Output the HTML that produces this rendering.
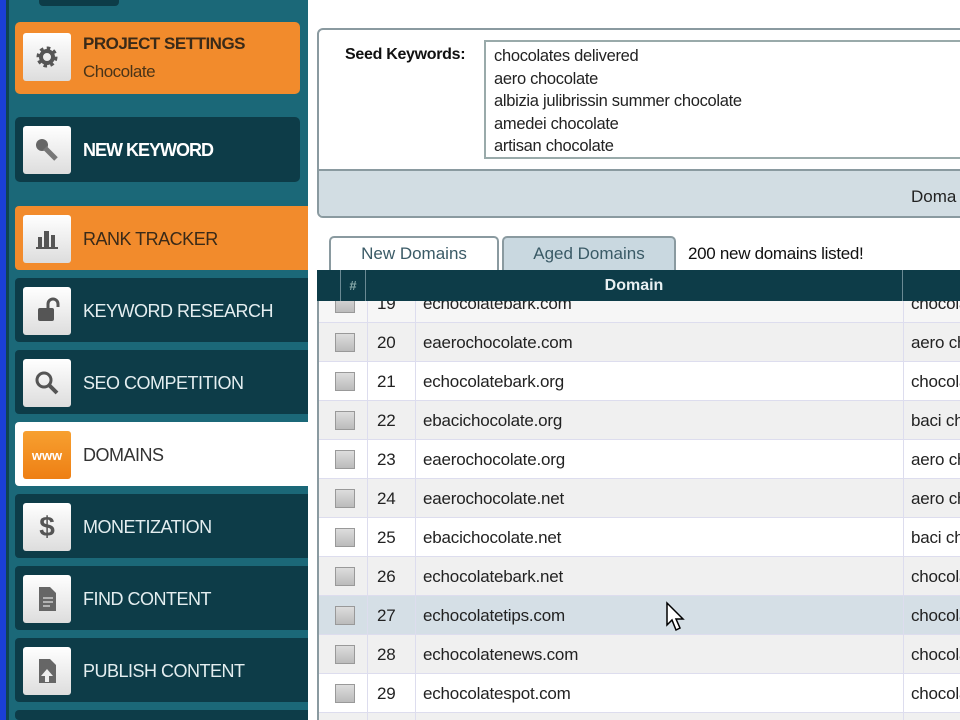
<!DOCTYPE html>
<html style="width:960px;height:720px;overflow:hidden"><head><style>
*{margin:0;padding:0;box-sizing:border-box}
body{width:960px;height:720px;overflow:hidden;background:#fff;font-family:"Liberation Sans",sans-serif;position:relative}
.blue{position:absolute;left:0;top:0;width:6px;height:720px;background:#1a3fd6}
.side{position:absolute;left:6px;top:0;width:302px;height:720px;background:#1b6878;border-left:3px solid #0f4450}
.item{position:absolute;left:15px;width:293px;height:64px;background:#0d3c48;border-radius:4px 0 0 4px;overflow:hidden}
.item .ic{position:absolute;left:8px;top:9px;width:48px;height:48px;background:linear-gradient(#fff,#ddd);border-radius:3px;display:flex;align-items:center;justify-content:center}
.item .t{position:absolute;left:68px;top:23px;color:#e4eef0;font-size:18px;letter-spacing:-0.5px;white-space:nowrap}
.org{background:#f28b2c}
.org .t{color:#3a2a18}
.wh{background:#fff}
.wh .t{color:#333}
.panel{position:absolute;left:317px;top:28px;width:660px;height:190px;border:2px solid #8a9aa0;border-radius:6px;background:#fff;overflow:hidden}
.lbl{position:absolute;left:26px;top:16px;font-weight:bold;font-size:16px;color:#111;letter-spacing:-0.3px}
.ta{position:absolute;left:165px;top:10px;width:500px;height:119px;border:2px solid #9aa;padding:3px 8px;font-size:16.5px;line-height:22.5px;color:#222;letter-spacing:-0.3px}
.bar{position:absolute;left:0;top:139px;width:100%;height:60px;background:#d2dde3;border-top:2px solid #8a9aa0}
.bar span{position:absolute;left:592px;top:16px;font-size:17px;color:#222}
.tab{position:absolute;top:236px;height:34px;border:2px solid #8a9aa0;border-bottom:none;border-radius:5px 5px 0 0;font-size:17px;color:#3a5a66;text-align:center;line-height:32px}
.hdr{position:absolute;left:317px;top:270px;width:643px;height:31px;background:#0d3c48;color:#e8f0f2;font-weight:bold;font-size:16px;z-index:5}
.rows{position:absolute;left:317px;top:284px;width:643px;height:436px;overflow:hidden;border-left:2px solid #8a9aa0;z-index:1}
.r{position:relative;height:39px;border-bottom:1px solid #dde;font-size:17px;color:#222;white-space:nowrap;letter-spacing:-0.2px}
.r div{position:absolute;top:10px}
.cb{left:16px;top:10px!important;width:20px;height:19px;border:1px solid #999;background:linear-gradient(#ddd,#bbb)}
.vl{position:absolute;top:0;width:1px;height:100%;background:#dde;z-index:2}
</style></head><body>
<div class="blue"></div>
<div class="side">
<div style="position:absolute;left:30px;top:-8px;width:80px;height:14px;background:#0d3c48;border-radius:4px"></div>
</div>
<div class="item org" style="top:22px;height:72px;width:285px;border-radius:5px">
 <div class="ic" style="top:11px"><svg width="26" height="26" viewBox="0 0 26 26"><circle cx="13" cy="13" r="8" fill="none" stroke="#555" stroke-width="5" stroke-dasharray="3.2 3"/><circle cx="13" cy="13" r="6" fill="none" stroke="#555" stroke-width="4"/></svg></div>
 <div class="t" style="top:12px;font-weight:bold;font-size:17px">PROJECT SETTINGS</div>
 <div class="t" style="top:40px;font-size:17px;color:#4a3418">Chocolate</div>
</div>
<div class="item" style="top:117px;height:65px;width:285px;border-radius:5px">
 <div class="ic"><svg width="30" height="30" viewBox="0 0 30 30"><circle cx="10" cy="10" r="6" fill="#666"/><path d="M13 13 L24 24" stroke="#777" stroke-width="5"/></svg></div>
 <div class="t" style="font-weight:bold;color:#fff;letter-spacing:-1px">NEW KEYWORD</div>
</div>
<div class="item org" style="top:206px">
 <div class="ic"><svg width="26" height="24" viewBox="0 0 26 24"><rect x="4" y="10" width="4" height="10" fill="#555"/><rect x="10" y="4" width="5" height="16" fill="#555"/><rect x="17" y="8" width="4" height="12" fill="#555"/><rect x="2" y="20" width="22" height="2" fill="#555"/></svg></div>
 <div class="t">RANK TRACKER</div>
</div>
<div class="item" style="top:278px">
 <div class="ic"><svg width="30" height="30" viewBox="0 0 30 30"><path d="M16 12 V8 a5 5 0 0 1 10 0 v3" fill="none" stroke="#555" stroke-width="3"/><rect x="6" y="12" width="16" height="13" rx="2" fill="#555"/></svg></div>
 <div class="t">KEYWORD RESEARCH</div>
</div>
<div class="item" style="top:350px">
 <div class="ic"><svg width="30" height="30" viewBox="0 0 30 30"><circle cx="12" cy="12" r="7" fill="none" stroke="#555" stroke-width="3"/><path d="M17 17 L25 25" stroke="#555" stroke-width="4"/></svg></div>
 <div class="t">SEO COMPETITION</div>
</div>
<div class="item wh" style="top:422px">
 <div class="ic" style="background:linear-gradient(#f7a030,#ee7f14);color:#fff;font-size:13px;font-weight:bold">www</div>
 <div class="t">DOMAINS</div>
</div>
<div class="item" style="top:494px">
 <div class="ic" style="font-size:28px;font-weight:bold;color:#555">$</div>
 <div class="t">MONETIZATION</div>
</div>
<div class="item" style="top:566px">
 <div class="ic"><svg width="24" height="28" viewBox="0 0 24 28"><path d="M4 2 H15 L21 8 V26 H4 Z" fill="#666"/><path d="M8 13h10M8 17h10M8 21h7" stroke="#ccc" stroke-width="1.5"/></svg></div>
 <div class="t">FIND CONTENT</div>
</div>
<div class="item" style="top:638px">
 <div class="ic"><svg width="24" height="28" viewBox="0 0 24 28"><path d="M4 2 H15 L21 8 V26 H4 Z" fill="#666"/><path d="M12 12 L6 19 H10 V25 H14 V19 H18 Z" fill="#eee"/></svg></div>
 <div class="t">PUBLISH CONTENT</div>
</div>
<div class="item" style="top:710px;height:10px"></div>

<div class="panel">
 <div class="lbl">Seed Keywords:</div>
 <div class="ta">chocolates delivered<br>aero chocolate<br>albizia julibrissin summer chocolate<br>amedei chocolate<br>artisan chocolate</div>
 <div class="bar"><span>Doma</span></div>
</div>
<div class="tab" style="left:329px;width:170px;background:#fff">New Domains</div>
<div class="tab" style="left:502px;width:174px;background:#c9d8e0">Aged Domains</div>
<div style="position:absolute;left:688px;top:244px;font-size:17px;color:#111;letter-spacing:-0.3px">200 new domains listed!</div>
<div class="hdr">
 <div style="position:absolute;left:23px;top:0;width:26px;height:31px;border-left:1px solid #6a8a94;border-right:1px solid #6a8a94;text-align:center;line-height:31px;font-size:13px;color:#8aa">#</div>
 <div style="position:absolute;left:49px;width:536px;text-align:center;line-height:31px">Domain</div>
 <div style="position:absolute;left:585px;top:0;width:1px;height:31px;background:#6a8a94"></div>
</div>
<div class="rows">
 <div class="vl" style="left:48px"></div><div class="vl" style="left:96px"></div><div class="vl" style="left:584px"></div>
 <div class="r" style="background:#f6f6f6"><div class="cb"></div><div style="left:58px">19</div><div style="left:104px">echocolatebark.com</div><div style="left:592px">chocolate</div></div>
 <div class="r" style="background:#f0f0f0"><div class="cb"></div><div style="left:58px">20</div><div style="left:104px">eaerochocolate.com</div><div style="left:592px">aero chocolate</div></div>
 <div class="r" style="background:#fff"><div class="cb"></div><div style="left:58px">21</div><div style="left:104px">echocolatebark.org</div><div style="left:592px">chocolate</div></div>
 <div class="r" style="background:#f0f0f0"><div class="cb"></div><div style="left:58px">22</div><div style="left:104px">ebacichocolate.org</div><div style="left:592px">baci chocolate</div></div>
 <div class="r" style="background:#fff"><div class="cb"></div><div style="left:58px">23</div><div style="left:104px">eaerochocolate.org</div><div style="left:592px">aero chocolate</div></div>
 <div class="r" style="background:#f0f0f0"><div class="cb"></div><div style="left:58px">24</div><div style="left:104px">eaerochocolate.net</div><div style="left:592px">aero chocolate</div></div>
 <div class="r" style="background:#fff"><div class="cb"></div><div style="left:58px">25</div><div style="left:104px">ebacichocolate.net</div><div style="left:592px">baci chocolate</div></div>
 <div class="r" style="background:#f0f0f0"><div class="cb"></div><div style="left:58px">26</div><div style="left:104px">echocolatebark.net</div><div style="left:592px">chocolate</div></div>
 <div class="r" style="background:#d5dfe6"><div class="cb"></div><div style="left:58px">27</div><div style="left:104px">echocolatetips.com</div><div style="left:592px">chocolate</div>
  <svg style="position:absolute;left:346px;top:5px;z-index:3" width="22" height="32" viewBox="0 0 22 32"><path d="M2 2 L2 24 L7 19 L11 29 L15 27 L11 18 L18 18 Z" fill="#fff" stroke="#000" stroke-width="1.5"/></svg></div>
 <div class="r" style="background:#f0f0f0"><div class="cb"></div><div style="left:58px">28</div><div style="left:104px">echocolatenews.com</div><div style="left:592px">chocolate</div></div>
 <div class="r" style="background:#fff"><div class="cb"></div><div style="left:58px">29</div><div style="left:104px">echocolatespot.com</div><div style="left:592px">chocolate</div></div>
 <div class="r" style="background:#f0f0f0"></div>
</div>
</body></html>
